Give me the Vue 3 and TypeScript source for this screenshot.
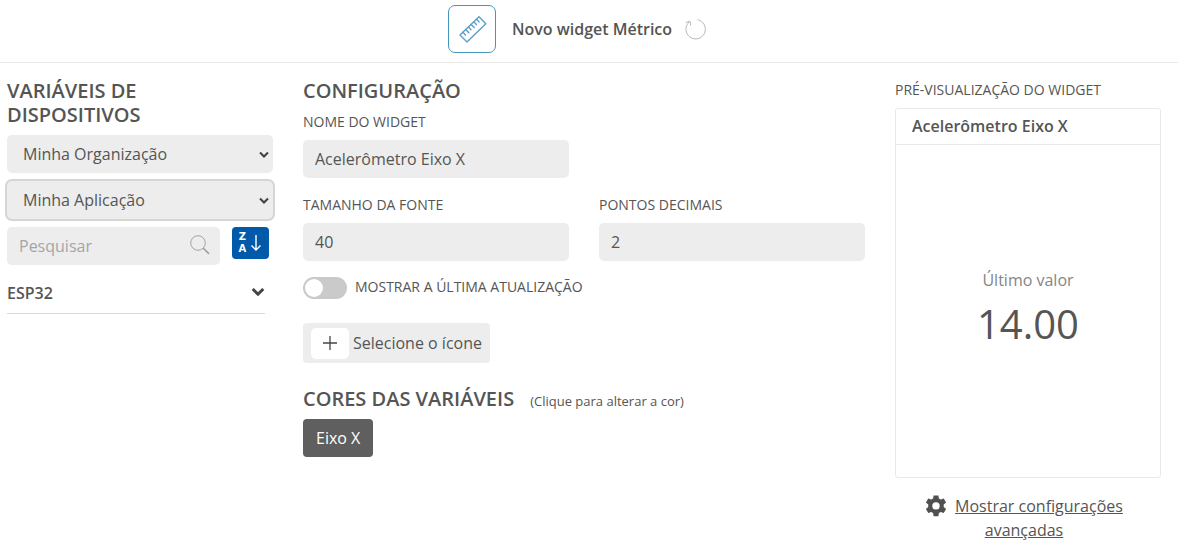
<script setup lang="ts">
import { computed, ref } from 'vue'

const organization = ref('Minha Organização')
const application = ref('Minha Aplicação')
const search = ref('')
const widgetName = ref('Acelerômetro Eixo X')
const fontSize = ref('40')
const decimals = ref('2')
const showLastUpdate = ref(false)
const variables = ref([{ name: 'Eixo X', color: '#5f5f5f' }])

const formatted = computed(() => (14).toFixed(Number(decimals.value) || 0))
</script>

<template>
  <div class="page">
    <header class="topbar">
      <span class="widget-icon">
        <svg width="30" height="30" viewBox="0 0 30 30" fill="none" stroke="#5a9fc8" stroke-width="1.4" stroke-linejoin="round" stroke-linecap="round">
          <path d="M3 21 L22 2.800 L28.800 9.800 L10 28 Z" />
          <path d="M5.900 18.200 l2.600 2.700 M8.700 15.600 l3.100 3.200 M11.400 13 l2.600 2.700 M14.100 10.400 l3.100 3.200 M16.800 7.800 l2.600 2.700 M19.500 5.200 l2.600 2.700" />
        </svg>
      </span>
      <h1 class="title">Novo widget Métrico</h1>
      <button type="button" class="reset" aria-label="Restaurar">
        <svg width="22" height="22" viewBox="0 0 22 22" fill="none" stroke="#b9b9b9" stroke-width="1">
          <path d="M12.500 1.700 A9.700 9.700 0 1 1 4.200 4" />
          <path d="M0.800 4.500 L5 3.200 L5.700 7.500" />
        </svg>
      </button>
    </header>

    <main class="columns">
      <section class="devices">
        <h2 class="heading">VARIÁVEIS DE DISPOSITIVOS</h2>
        <div class="select-wrap">
          <select v-model="organization" class="field" aria-label="Organização">
            <option>Minha Organização</option>
          </select>
          <svg class="caret" width="10" height="8" viewBox="0 0 10 8" fill="none" stroke="#3f3f3f" stroke-width="2"><path d="M1 1.500 L5 5.500 L9 1.500" /></svg>
        </div>
        <div class="select-wrap">
          <select v-model="application" class="field active" aria-label="Aplicação">
            <option>Minha Aplicação</option>
          </select>
          <svg class="caret" width="10" height="8" viewBox="0 0 10 8" fill="none" stroke="#3f3f3f" stroke-width="2"><path d="M1 1.500 L5 5.500 L9 1.500" /></svg>
        </div>
        <div class="search-row">
          <div class="search">
            <input v-model="search" class="field" type="text" placeholder="Pesquisar" aria-label="Pesquisar" />
            <svg class="lens" width="20" height="20" viewBox="0 0 20 20" fill="none" stroke="#a3a3a3">
              <circle cx="8" cy="8" r="7.300" />
              <path d="M13.200 13.200 L19 18.800" stroke-width="1.600" />
            </svg>
          </div>
          <button type="button" class="sort" aria-label="Ordenar de Z a A">
            <span class="letters"><span>Z</span><span>A</span></span>
            <svg width="12" height="18" viewBox="0 0 12 18" fill="none" stroke="#fff" stroke-width="1.400"><path d="M6 1 V16 M1.500 11.500 L6 16 L10.500 11.500" /></svg>
          </button>
        </div>
        <button type="button" class="device">
          <span>ESP32</span>
          <svg width="14" height="10" viewBox="0 0 14 10" fill="none" stroke="#454545" stroke-width="3"><path d="M1.700 1 L7 6.200 L12.300 1" /></svg>
        </button>
      </section>

      <section class="config">
        <h2 class="heading">CONFIGURAÇÃO</h2>
        <div class="form">
          <div class="group">
            <label for="name" class="label">NOME DO WIDGET</label>
            <input id="name" v-model="widgetName" class="field" type="text" />
          </div>
          <div class="group first">
            <label for="size" class="label">TAMANHO DA FONTE</label>
            <input id="size" v-model="fontSize" class="field" type="text" inputmode="numeric" />
          </div>
          <div class="group">
            <label for="decimals" class="label">PONTOS DECIMAIS</label>
            <input id="decimals" v-model="decimals" class="field" type="text" inputmode="numeric" />
          </div>
        </div>
        <div class="switch-row">
          <input id="last" v-model="showLastUpdate" class="switch" type="checkbox" />
          <label for="last" class="label">MOSTRAR A ÚLTIMA ATUALIZAÇÃO</label>
        </div>
        <button type="button" class="icon-picker">
          <span class="plus">
            <svg width="14" height="14" viewBox="0 0 14 14" stroke="#454545" stroke-width="1.300"><path d="M7 0 V14 M0 7 H14" /></svg>
          </span>
          Selecione o ícone
        </button>
        <div class="colors-title">
          <h2 class="heading">CORES DAS VARIÁVEIS</h2>
          <small>(Clique para alterar a cor)</small>
        </div>
        <div class="chips">
          <button v-for="v in variables" :key="v.name" type="button" class="chip" :style="{ backgroundColor: v.color }">{{ v.name }}</button>
        </div>
      </section>

      <section class="preview">
        <div class="label">PRÉ-VISUALIZAÇÃO DO WIDGET</div>
        <article class="card">
          <h3 class="card-title">{{ widgetName }}</h3>
          <div class="card-body">
            <div class="caption">Último valor</div>
            <div class="value" :style="{ fontSize: fontSize + 'px' }">{{ formatted }}</div>
          </div>
        </article>
        <div class="advanced">
          <svg class="gear" width="22" height="24" viewBox="0 -1 22 24" fill="#505050">
            <path fill-rule="evenodd" d="M8.600 0.500 h4.800 l.5 3 a8 8 0 0 1 1.900 1.100 l2.900-1.100 2.400 4.100 -2.400 2 a8 8 0 0 1 0 2.400 l2.400 2 -2.400 4.100 -2.900-1.100 a8 8 0 0 1 -1.900 1.100 l-.5 3.200 h-4.800 l-.5-3.200 a8 8 0 0 1 -1.900-1.100 l-2.900 1.100 -2.400-4.100 2.400-2 a8 8 0 0 1 0-2.400 l-2.400-2 2.400-4.100 2.900 1.100 a8 8 0 0 1 1.900-1.100 Z M11 7.200 a3.700 3.700 0 1 0 0 7.400 a3.700 3.700 0 1 0 0-7.400 Z" />
          </svg>
          <a href="#">Mostrar configurações avançadas</a>
        </div>
      </section>
    </main>
  </div>
</template>

<style>
body {
  background: #fff;
}
</style>

<style scoped>
.page,
.page * {
  box-sizing: border-box;
}
.page {
  font-family: "Open Sans", "Noto Sans", sans-serif;
  font-size: 16px;
  line-height: 24px;
  color: #555;
}
button,
input,
select {
  font: inherit;
  color: inherit;
  border: 0;
  margin: 0;
}
button {
  cursor: pointer;
}
svg {
  display: block;
  flex: none;
}
.topbar {
  display: flex;
  align-items: center;
  justify-content: center;
  padding: 5px 23px 9px 0;
  border-bottom: 1px solid #e9e9e9;
}
.widget-icon {
  display: grid;
  place-items: center;
  width: 48px;
  height: 48px;
  border: 1px solid #4596bd;
  border-radius: 7px;
}
.title {
  margin: 0 13px 0 16px;
  font-size: 16px;
  font-weight: 600;
}
.reset {
  padding: 0;
  background: none;
}
.columns {
  display: grid;
  grid-template-columns: minmax(0, 1fr) minmax(0, calc(50% - 15px)) minmax(0, 1fr);
  gap: 30px;
  padding: 16px 17px 0 7px;
}
.heading {
  margin: 0;
  font-size: 20px;
  line-height: 24px;
  font-weight: 600;
}
.label {
  display: block;
  font-size: 14px;
  line-height: 20px;
}
.field {
  display: block;
  width: 100%;
  height: 38px;
  padding: 6px 12px;
  border-radius: 5px;
  background: #ededed;
  outline: none;
}
.field::placeholder {
  color: #a5a5a5;
  opacity: 1;
}
.devices {
  display: flex;
  flex-direction: column;
  gap: 8px;
}
.select-wrap {
  position: relative;
}
.select-wrap .field {
  appearance: none;
  padding-left: 16px;
}
.select-wrap .active {
  box-shadow: 0 0 0 2px #d5d5d5;
}
.caret {
  position: absolute;
  right: 4px;
  top: 16px;
  pointer-events: none;
}
.search-row {
  display: flex;
  align-items: flex-start;
  gap: 12px;
}
.search {
  position: relative;
  width: 80%;
}
.lens {
  position: absolute;
  right: 10px;
  top: 8px;
}
.sort {
  display: flex;
  align-items: center;
  justify-content: center;
  gap: 4px;
  width: 37px;
  height: 32px;
  padding: 0;
  border-radius: 4px;
  background: #005aa9;
  color: #fff;
}
.letters {
  display: flex;
  flex-direction: column;
  font-family: "DejaVu Sans", sans-serif;
  font-size: 10px;
  line-height: 12px;
  font-weight: 700;
}
.device {
  display: flex;
  align-items: center;
  justify-content: space-between;
  margin: 0 8px 0 0;
  padding: 8px 0;
  border-bottom: 1px solid #d9d9d9;
  background: none;
  font-weight: 600;
}
.form {
  display: grid;
  grid-template-columns: 1fr 1fr;
  gap: 17px 30px;
  margin-top: 9px;
}
.group {
  display: flex;
  flex-direction: column;
  gap: 8px;
}
.first {
  grid-column: 1;
}
.switch-row {
  display: flex;
  gap: 8px;
  margin-top: 16px;
}
.switch {
  appearance: none;
  width: 44px;
  height: 22px;
  padding: 2px;
  border-radius: 11px;
  background: #cacaca;
}
.switch::before {
  content: "";
  display: block;
  width: 18px;
  height: 18px;
  border-radius: 50%;
  background: #fff;
}
.switch:checked {
  background: #005aa9;
}
.switch:checked::before {
  margin-left: auto;
}
.icon-picker {
  display: flex;
  align-items: center;
  gap: 4px;
  height: 40px;
  margin-top: 24px;
  padding: 0 8px;
  border-radius: 4px;
  background: #ededed;
}
.plus {
  display: grid;
  place-items: center;
  width: 38px;
  height: 31px;
  border-radius: 5px;
  background: #fff;
}
.colors-title {
  display: flex;
  align-items: baseline;
  gap: 16px;
  margin-top: 24px;
}
.colors-title small {
  font-size: 13px;
  line-height: 20px;
}
.chips {
  display: flex;
  gap: 8px;
  margin-top: 8px;
}
.chip {
  height: 38px;
  padding: 6px 13px;
  border-radius: 4px;
  color: #fff;
}
.preview {
  padding-top: 1px;
}
.card {
  display: flex;
  flex-direction: column;
  height: 370px;
  margin-top: 8px;
  border: 1px solid #e9e9e9;
  border-radius: 3px;
}
.card-title {
  margin: 0;
  padding: 5px 16px 6px;
  border-bottom: 1px solid #e9e9e9;
  font-size: 16px;
  font-weight: 600;
}
.card-body {
  flex: 1;
  display: flex;
  flex-direction: column;
  align-items: center;
  justify-content: center;
  padding-top: 2px;
}
.caption {
  color: #858585;
}
.value {
  line-height: 64px;
}
.advanced {
  margin-top: 16px;
  padding: 0 24px 0 16px;
  text-align: center;
}
.gear {
  display: inline-block;
  margin-right: 8px;
  vertical-align: top;
}
.advanced a {
  color: inherit;
}
</style>
